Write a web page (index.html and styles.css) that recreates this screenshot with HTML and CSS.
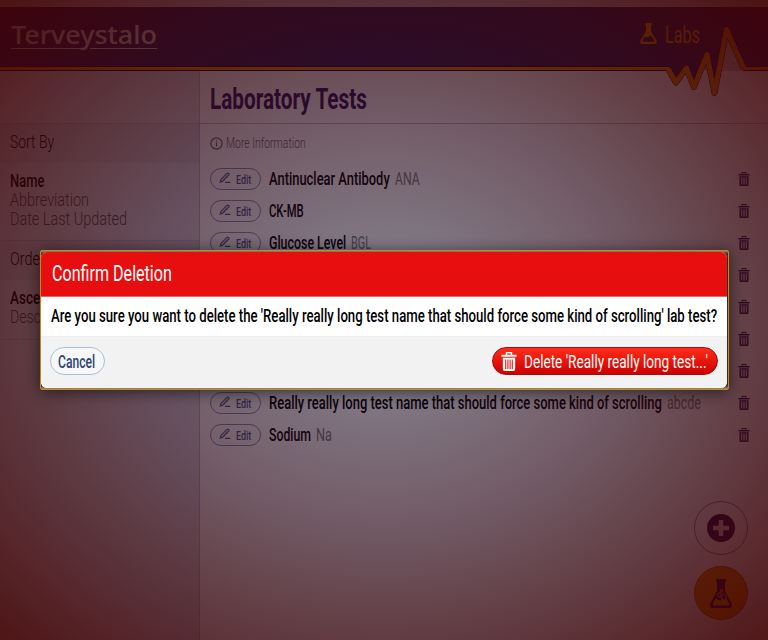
FILE: index.html
```html
<!DOCTYPE html>
<html lang="en">
<head>
<meta charset="utf-8">
<title>Laboratory Tests</title>
<link rel="stylesheet" href="styles.css">
</head>
<body>
<svg class="defs" width="0" height="0" aria-hidden="true">
  <symbol id="trash" viewBox="0 0 16 20">
    <path fill-rule="evenodd" d="M4.600 3V0h6.800v3H16v2H0V3zM6 3h4V1.500H6zM1.500 6h13v12.200q0 1.800-1.800 1.800H3.300q-1.800 0-1.800-1.800zM4 8v10h1.100V8zm2.300 0v10h1.100V8zm2.300 0v10h1.100V8zm2.300 0v10h1.100V8z"/>
  </symbol>
  <symbol id="pen" viewBox="0 0 12 12">
    <path d="M1.200 10.300l.9-3L8 1.400q.8-.7 1.600 0t0 1.600L3.800 9zM6 10.400h5.400" fill="none" stroke="currentColor" stroke-width="1.200" stroke-linejoin="round"/>
  </symbol>
  <symbol id="flask-plain" viewBox="0 0 17 21">
    <path fill-rule="evenodd" d="M5 0h7v2h-1v6.500l5.300 8.500Q18 21 14 21H3Q-1 21 .700 17L6 8.500V2H5zM4.500 14L2.700 17.300q-.5 1.500 1 1.500h9.600q1.500 0 1-1.500L12.500 14.300 10 12.800 7.500 14.300z"/>
  </symbol>
  <symbol id="flask" viewBox="0 0 22 28">
    <path fill-rule="evenodd" d="M6 0h10v3h-1v8.500l6.400 12Q23 28 19 28H3Q-1 28 .600 23.500L7 11.500V3H6zM5.500 18.500L3 23.500q-.6 2 1 2h14q1.600 0 1-2l-2.500-5q-2.500-.5-4.500 1.500T5.500 18.500z"/>
  </symbol>
</svg>

<div class="page">
  <header class="top">
    <svg class="pulse" width="768" height="100" viewBox="0 0 768 100">
      <path class="pulse-fill" d="M0 7H768V68.500H744L727 29 714.500 94 707 54 694 88 686.500 68 676 83 668 68.500H0z"/>
      <path class="pulse-edge" d="M0 68.500H669M743 68.500H768"/>
      <path class="pulse-edge wide" d="M668 68.500L676 82.500 686.500 68 694 87 707 54.500 714.500 93 726.500 29.500 744 68.500"/>
      <path class="pulse-line" d="M0 68.500H669M743 68.500H768"/>
      <path class="pulse-line wide" d="M668 68.500L676 82.500 686.500 68 694 87 707 54.500 714.500 93 726.500 29.500 744 68.500"/>
    </svg>
    <div class="logo"><span class="fit" style="width:146px"><span>Terveystalo</span></span><i class="rule"></i></div>
    <div class="section"><svg class="flask-small"><use href="#flask-plain"/></svg><span class="fit" style="width:35px"><span>Labs</span></span></div>
  </header>

  <div class="columns">
    <aside class="side">
      <h3><span class="fit" style="width:44px"><span>Sort By</span></span></h3>
      <ul>
        <li class="on"><span class="fit" style="width:34px"><span>Name</span></span></li>
        <li><span class="fit" style="width:79px"><span>Abbreviation</span></span></li>
        <li><span class="fit" style="width:117px"><span>Date Last Updated</span></span></li>
      </ul>
      <h3><span class="fit" style="width:35px"><span>Order</span></span></h3>
      <ul>
        <li class="on"><span class="fit" style="width:64px"><span>Ascending</span></span></li>
        <li><span class="fit" style="width:73px"><span>Descending</span></span></li>
      </ul>
    </aside>
    <main class="content">
      <h1><span class="fit" style="width:157px"><span>Laboratory Tests</span></span></h1>
      <div class="info">
        <svg width="13" height="13" viewBox="0 0 13 13"><circle cx="6.500" cy="6.500" r="5.600" fill="none" stroke="currentColor" stroke-width="1.200"/><path d="M6.500 5.500v4M6.500 3.300v1.300" stroke="currentColor" stroke-width="1.200"/></svg>
        <span class="fit" style="width:80px"><span>More Information</span></span>
      </div>
      <div class="row"><span class="edit"><svg><use href="#pen"/></svg><span class="fit" style="width:15px"><span>Edit</span></span></span><span class="fit name" style="width:121px"><span>Antinuclear Antibody</span></span><span class="fit abbr" style="width:25px"><span>ANA</span></span><svg class="trash"><use href="#trash"/></svg></div>
      <div class="row"><span class="edit"><svg><use href="#pen"/></svg><span class="fit" style="width:15px"><span>Edit</span></span></span><span class="fit name" style="width:35px"><span>CK-MB</span></span><svg class="trash"><use href="#trash"/></svg></div>
      <div class="row"><span class="edit"><svg><use href="#pen"/></svg><span class="fit" style="width:15px"><span>Edit</span></span></span><span class="fit name" style="width:77px"><span>Glucose Level</span></span><span class="fit abbr" style="width:20px"><span>BGL</span></span><svg class="trash"><use href="#trash"/></svg></div>
      <div class="row"><svg class="trash"><use href="#trash"/></svg></div>
      <div class="row"><svg class="trash"><use href="#trash"/></svg></div>
      <div class="row"><svg class="trash"><use href="#trash"/></svg></div>
      <div class="row"><svg class="trash"><use href="#trash"/></svg></div>
      <div class="row"><span class="edit"><svg><use href="#pen"/></svg><span class="fit" style="width:15px"><span>Edit</span></span></span><span class="fit name" style="width:393px"><span>Really really long test name that should force some kind of scrolling</span></span><span class="fit abbr" style="width:34px"><span>abcde</span></span><svg class="trash"><use href="#trash"/></svg></div>
      <div class="row"><span class="edit"><svg><use href="#pen"/></svg><span class="fit" style="width:15px"><span>Edit</span></span></span><span class="fit name" style="width:42px"><span>Sodium</span></span><span class="fit abbr" style="width:16px"><span>Na</span></span><svg class="trash"><use href="#trash"/></svg></div>
    </main>
  </div>

  <div class="fabs">
    <div class="fab"><svg width="28" height="28" viewBox="0 0 28 28"><circle cx="14" cy="14" r="14" fill="#301058"/><path d="M14 6v16M6 14h16" stroke="#d8ccd8" stroke-width="4.500"/></svg></div>
    <div class="fab orange"><svg width="22" height="29" viewBox="0 0 22 28" preserveAspectRatio="none"><use href="#flask"/><g fill="#2a0a50" stroke="#f08c00" stroke-width="1.100"><circle cx="11.500" cy="11.500" r="1.300"/><circle cx="9.500" cy="15.500" r="1.800"/><circle cx="13.800" cy="17.500" r="2.500"/></g></svg></div>
  </div>
</div>

<div class="backdrop">
  <div class="frame">
    <section class="dialog">
      <h2><span class="fit" style="width:120px"><span>Confirm Deletion</span></span></h2>
      <p><span class="fit" style="width:666px"><span>Are you sure you want to delete the 'Really really long test name that should force some kind of scrolling' lab test?</span></span></p>
      <footer>
        <button class="cancel"><span class="fit" style="width:37px"><span>Cancel</span></span></button>
        <button class="delete"><svg width="16" height="19"><use href="#trash"/></svg><span class="fit" style="width:184px"><span>Delete 'Really really long test...'</span></span></button>
      </footer>
    </section>
  </div>
</div>
<script src="fit.js"></script>
</body>
</html>
```
FILE: styles.css
```css
* { box-sizing: border-box; margin: 0; padding: 0; }
html { overflow: hidden; }
body { position: relative; width: 768px; height: 640px; overflow: hidden; font-family: Roboto, "Liberation Sans", sans-serif; font-size: 19px; color: #000; background: #fff; }
.defs { position: absolute; }
svg { display: block; flex: none; }
ul { list-style: none; }

/* Condensed text: the outer box has the final width, the inner one is scaled into it. */
.fit { display: inline-block; vertical-align: top; white-space: nowrap; flex: none; }
.fit > span { display: inline-block; transform-origin: 0 50%; }

.page { position: relative; z-index: 0; width: 768px; height: 640px; overflow: hidden; display: flex; flex-direction: column; background: #fff; }
.top { position: relative; height: 71px; background: #cfc8cc; display: flex; justify-content: space-between; padding: 20px 68px 0 11px; }
.pulse { position: absolute; left: 0; top: 0; z-index: 1; }
.pulse-fill { fill: #2c2464; }
.pulse-edge { fill: none; stroke: #20004c; stroke-width: 5; stroke-linejoin: round; }
.pulse-edge.wide { stroke-width: 6; }
.pulse-line { fill: none; stroke: #e89800; stroke-width: 3; stroke-linejoin: round; }
.pulse-line.wide { stroke-width: 5; }
.logo, .section { position: relative; z-index: 2; }
.logo { font-family: "Noto Sans", sans-serif; font-weight: 550; font-size: 26px; line-height: 29px; color: #e8e0e8; height: 30px; }
.rule { display: block; height: 1px; margin-top: -1px; background: linear-gradient(90deg, #e8e0e8 70px, transparent 70px, transparent 79px, #e8e0e8 79px); }
.section { display: flex; gap: 8px; color: #f0a000; font-size: 24.500px; line-height: 29px; }
.flask-small { width: 17px; height: 21px; margin-top: 3px; fill: #f0a000; }

.columns { flex: 1; display: flex; }
.side { width: 200px; background: linear-gradient(90deg, #e8e4e4, #dcdce6); border-right: 1px solid #bbb; padding-top: 52px; font-weight: 300; }
.side h3 { height: 40px; line-height: 35px; padding-left: 10px; font-size: 19px; font-weight: 300; background: rgba(80,70,90,.07); border-top: 1px solid rgba(80,70,90,.12); }
.side ul { padding: 8px 10px 11px; }
.side ul:last-child { border-bottom: 1px solid #d2ced6; }
.side li { height: 19px; line-height: 19px; color: #585058; }
.side h3 + ul { height: 77px; }
.side h3:nth-of-type(2) + ul { height: 60px; }
.side .on { font-weight: 500; color: #000; }

.content { flex: 1; background: #fff; }
h1 { height: 53px; padding-left: 10px; line-height: 55px; font-size: 30px; font-weight: 700; color: #301868; border-bottom: 1px solid #c4c0c8; }
.info { height: 39px; padding-left: 10px; display: flex; align-items: center; gap: 3px; font-size: 15px; font-weight: 300; color: #666; }
.info .fit { margin-top: -1px; }
.row { height: 32px; padding: 0 18px 0 10px; display: flex; align-items: center; }
.row > .fit { margin-top: -2px; }
.edit { width: 51px; height: 22px; border: 1px solid #8490bc; border-radius: 11px; padding-left: 8px; display: flex; align-items: center; gap: 5px; font-size: 13px; font-weight: 500; color: #485890; margin-right: 8px; }
.edit svg { width: 12px; height: 12px; margin-top: -2px; }
.name { font-weight: 500; }
.abbr { color: #808080; margin-left: 5px; }
.trash { width: 12px; height: 14px; margin-left: auto; fill: #402468; }

.fabs { position: absolute; right: 20px; bottom: 20px; display: flex; flex-direction: column; gap: 11px; }
.fab { width: 54px; height: 54px; border-radius: 50%; border: 1px solid #9880a8; display: flex; align-items: center; justify-content: center; }
.fab.orange { background: #f09400; border-color: #b86000; fill: #2a0a50; }

.backdrop { position: absolute; z-index: 1; left: 0; top: 0; width: 768px; height: 640px; display: flex; align-items: center; justify-content: center; background: radial-gradient(ellipse farthest-corner at center, rgba(8,8,32,.48) 0%, rgba(38,3,20,.65) 45%, rgba(50,2,10,.77) 70%, rgba(64,0,2,.91) 100%); }
.frame { width: 689px; height: 140px; margin-left: 1px; border: 1px solid #c88a08; border-radius: 2px; padding: 1px 0; background: linear-gradient(#8a8585, #302832 3px, #302832 134px, #909090); box-shadow: 0 2px 16px rgba(0,0,0,.6); }
.dialog { width: 686px; height: 136px; border-radius: 6px; overflow: hidden; background: #fff; display: flex; flex-direction: column; }
h2 { height: 45px; padding-left: 11px; line-height: 43px; font-size: 22px; font-weight: 400; color: #fff; background: #e60e0e; border-bottom: 1px solid #f06060; }
.dialog p { height: 39px; padding-left: 10px; line-height: 37px; font-weight: 500; }
.dialog footer { flex: 1; display: flex; justify-content: space-between; align-items: flex-start; padding: 10px 9px 0 9px; background: #f2f2f2; border-top: 1px solid #eee; }
button { font: inherit; height: 28px; border-radius: 14px; display: flex; align-items: center; }
.cancel { width: 55px; padding-left: 7px; border: 1px solid #a6c0dc; background: #f7f7f7; color: #2c4674; font-weight: 500; }
.delete { width: 226px; padding-left: 8px; gap: 7px; border: 1px solid #a01010; background: linear-gradient(#ff2c18, #cc0000); color: #fff; fill: #fff; }
```
FILE: fit.js
```js
document.querySelectorAll('.fit').forEach(function (box) {
  var inner = box.firstElementChild;
  inner.style.transform = 'scaleX(' + box.clientWidth / inner.offsetWidth + ')';
});
```
